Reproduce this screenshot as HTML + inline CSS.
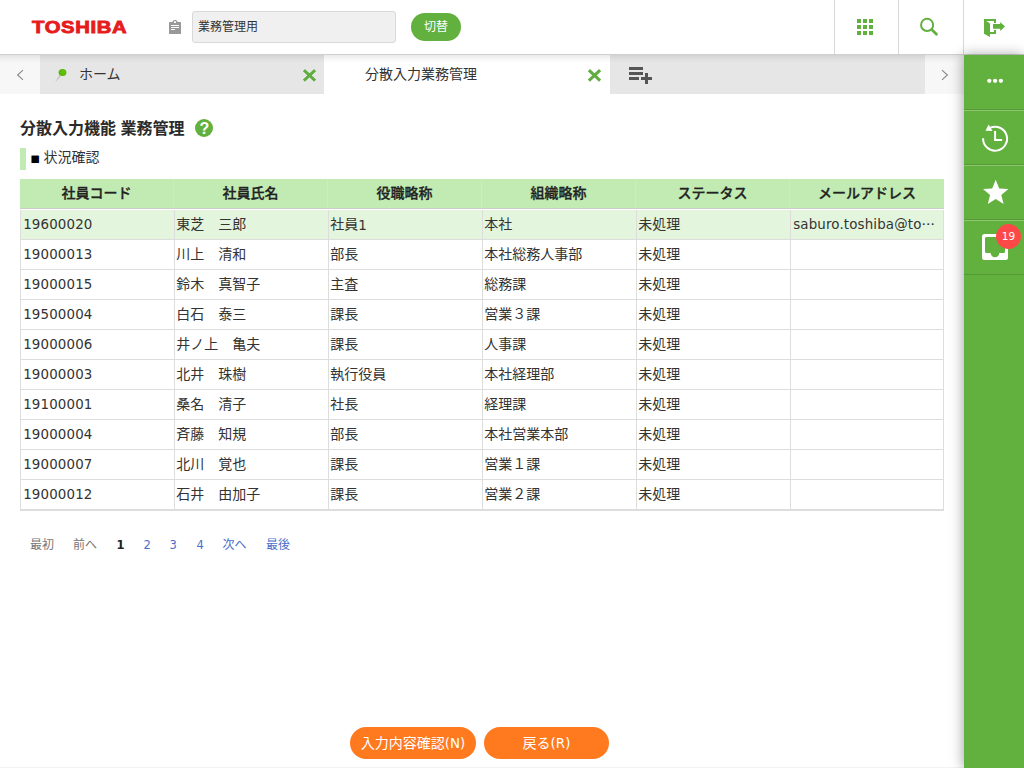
<!DOCTYPE html>
<html lang="ja">
<head>
<meta charset="utf-8">
<title>分散入力業務管理</title>
<style>
*{box-sizing:border-box;margin:0;padding:0}
html,body{width:1024px;height:768px;overflow:hidden;background:#fff}
body{position:relative;font-family:"Liberation Sans","Noto Sans CJK JP",sans-serif;font-size:14px;color:#333}
.abs{position:absolute}
/* header */
#hdr{position:absolute;left:0;top:0;width:1024px;height:55px;background:#fff;z-index:5;border-bottom:1px solid #d0d0d0}
#hsh{position:absolute;left:0;top:55px;width:964px;height:8px;z-index:5;background:linear-gradient(rgba(0,0,0,.085),rgba(0,0,0,.03) 50%,rgba(0,0,0,0))}
#logo{position:absolute;left:31.5px;top:14.1px;height:28px;line-height:28px;font-weight:bold;font-size:16.7px;color:#e61c1c;letter-spacing:.55px;-webkit-text-stroke:.85px #e61c1c;white-space:nowrap;transform-origin:0 50%;transform:scaleX(1.213)}
#ws{position:absolute;left:192px;top:11px;width:204px;height:32px;background:#f0f0f0;border:1px solid #d9d9d9;border-radius:3px;font-size:12px;line-height:30px;padding-left:5px;color:#333}
#sw{position:absolute;left:411px;top:13px;width:50px;height:28px;border-radius:14px;background:#62b03e;color:#fff;font-size:12px;line-height:28px;text-align:center}
.hb{position:absolute;top:0;width:65px;height:54px;border-left:1px solid #d8d8d8}
/* tabs */
#tabs{position:absolute;left:0;top:54px;width:964px;height:40px;background:#e6e6e6}
.tarrow{position:absolute;top:0;width:40px;height:40px;background:#f7f7f7}
.tab{position:absolute;top:0;height:40px;line-height:40px;font-size:14px;color:#333}
/* sidebar */
#side{position:absolute;left:964px;top:55px;width:60px;height:713px;background:#62b03e;z-index:6;box-shadow:-1px 0 12px rgba(0,0,0,.36)}
.si{position:absolute;left:0;width:60px;height:55px;border-top:1px solid rgba(255,255,255,.28);border-bottom:1px solid rgba(0,0,0,.12)}
/* content */
h1{position:absolute;left:20px;top:117px;font-size:16px;line-height:24px;font-weight:bold;color:#2b2b2b;white-space:nowrap}
#sec{position:absolute;left:20px;top:148px;height:22px;border-left:6px solid #c1ebb4;padding-left:5px;font-size:14px;line-height:20px;color:#333;white-space:nowrap}
#th{position:absolute;left:20px;top:179px;width:924px;height:30px;background:#c1ebb3;border-bottom:1px solid #ccc;display:flex;font-weight:500;-webkit-text-stroke:.3px #222;color:#222;font-size:14px}
#th div{width:154px;height:29px;line-height:29px;text-align:center;border-right:1px solid #ddd;white-space:nowrap}
#th div:last-child{border-right:none}
.r{position:absolute;left:20px;width:924px;height:30px;border-bottom:1px solid #ddd;display:flex;font-size:14px;color:#333}
.r div{width:154px;height:29px;line-height:28px;border-left:1px solid #ddd;padding-left:1.300px;white-space:nowrap;overflow:hidden}
.r div:last-child{border-right:1px solid #ddd}
.r.sel{background:#e3f5dc}
.r .n{font-family:"DejaVu Sans","Liberation Sans",sans-serif;font-size:13.4px;letter-spacing:.15px}
.r div.n{line-height:30px;padding-left:2.200px}
.r span.n{position:relative;top:1px}
.el{font-family:"Noto Sans CJK JP",sans-serif;letter-spacing:0;line-height:0}
#pg{position:absolute;left:0;top:536px;font-size:12px;line-height:18px;white-space:nowrap}
#pg span{position:absolute;top:0}
#pg .d{font-family:"DejaVu Sans","Liberation Sans",sans-serif;font-size:11.500px}
.bl{font-family:"DejaVu Sans","Liberation Sans",sans-serif;font-size:13.400px}
.btn{position:absolute;top:727px;height:32px;border-radius:16px;background:#ff7a1f;color:#fff;font-size:14px;line-height:32px;text-align:center;white-space:nowrap}
</style>
</head>
<body>

<div id="hdr">
  <div id="logo">TOSHIBA</div>
  <svg class="abs" style="left:168px;top:19px" width="14" height="16" viewBox="0 0 14 16"><path fill="#999" fill-rule="evenodd" d="M1.500 3h3C4.700 1.600 5.600 1 7 1s2.300.600 2.500 2h3a.5.500 0 0 1 .5.500v11a.5.500 0 0 1-.5.500h-11a.5.500 0 0 1-.5-.5v-11a.5.500 0 0 1 .5-.5zM6 2.200v1.700h2V2.200zM3 6v1h8V6zm0 2v1h8V8zm0 2v1h4v-1z"/></svg>
  <div id="ws">業務管理用</div>
  <div id="sw">切替</div>
  <div class="hb" style="left:834px">
    <svg class="abs" style="left:22px;top:19px" width="16" height="16" viewBox="0 0 16 16" fill="#62b03e"><rect x="0" y="0" width="4" height="4"/><rect x="6" y="0" width="4" height="4"/><rect x="12" y="0" width="4" height="4"/><rect x="0" y="6" width="4" height="4"/><rect x="6" y="6" width="4" height="4"/><rect x="12" y="6" width="4" height="4"/><rect x="0" y="12" width="4" height="4"/><rect x="6" y="12" width="4" height="4"/><rect x="12" y="12" width="4" height="4"/></svg>
  </div>
  <div class="hb" style="left:898px">
    <svg class="abs" style="left:20px;top:16px" width="22" height="22" viewBox="0 0 22 22" fill="none" stroke="#62b03e"><circle cx="8.1" cy="8.900" r="6.050" stroke-width="2"/><path d="M13.400 14.200L17.500 18.200" stroke-width="2.700" stroke-linecap="round"/></svg>
  </div>
  <div class="hb" style="left:963px;width:61px">
    <svg class="abs" style="left:19px;top:17px" width="24" height="22" viewBox="0 0 24 22" fill="#62b03e"><path d="M1 2h12v4h-2V4H3.300L7 6.400V15h4v-2h2v4H7v3L1 16.800z"/><path d="M10 7.100h7.200V4.900l4.800 4.500-4.800 4.600v-2.200H10z"/></svg>
  </div>
</div>

<div id="hsh"></div>
<div id="tabs">
  <div class="tarrow" style="left:0"><svg class="abs" style="left:15px;top:15px" width="10" height="12" viewBox="0 0 10 12" fill="none" stroke="#888" stroke-width="1.100"><path d="M8 1.200L2.600 6l5.400 4.800"/></svg></div>
  <div class="tab" style="left:40px;width:284px;background:#e6e6e6">
    <svg class="abs" style="left:14px;top:13px" width="14" height="16" viewBox="0 0 14 16"><path d="M5.200 8.200L7 9.300L1.800 14.700L1.400 14.400z" fill="#c6c6c6"/><ellipse cx="8.500" cy="5.500" rx="3.900" ry="3.550" fill="#58b60a"/><ellipse cx="9.200" cy="5.200" rx="2.600" ry="2.300" fill="#64c404" opacity=".8"/></svg>
    <span class="abs" style="left:39px;top:0">ホーム</span>
    <svg class="abs" style="left:262px;top:13.500px" width="15" height="15" viewBox="0 0 15 15" fill="none"><path d="M1.900 2.150L13.100 12.550M13.100 2.150L1.900 12.550" stroke="#fff" stroke-opacity=".55" stroke-width="4.200"/><path d="M1.900 2.150L13.100 12.550M13.100 2.150L1.900 12.550" stroke="#62ac44" stroke-width="3.100"/></svg>
  </div>
  <div class="tab" style="left:324px;width:286px;background:#fff">
    <span class="abs" style="left:41px;top:0">分散入力業務管理</span>
    <svg class="abs" style="left:263px;top:13.500px" width="15" height="15" viewBox="0 0 15 15" fill="none"><path d="M1.900 2.150L13.100 12.550M13.100 2.150L1.900 12.550" stroke="#fff" stroke-opacity=".55" stroke-width="4.200"/><path d="M1.900 2.150L13.100 12.550M13.100 2.150L1.900 12.550" stroke="#62ac44" stroke-width="3.100"/></svg>
  </div>
  <svg class="abs" style="left:628px;top:12px" width="26" height="20" viewBox="0 0 26 20" fill="#555"><rect x="1" y="1" width="14" height="3"/><rect x="1" y="6" width="14" height="3"/><rect x="1" y="11" width="10" height="3"/><rect x="13" y="11" width="11" height="3"/><rect x="17" y="7" width="3" height="11"/></svg>
  <div class="tarrow" style="left:925px;width:39px"><svg class="abs" style="left:14.500px;top:15px" width="10" height="12" viewBox="0 0 10 12" fill="none" stroke="#888" stroke-width="1.100"><path d="M2 1.200l5.400 4.800L2 10.800"/></svg></div>
</div>

<div id="side">
  <div class="si" style="top:0;border-top:none">
    <svg class="abs" style="left:20px;top:22px" width="22" height="8" viewBox="0 0 22 8" fill="#fff"><circle cx="5.300" cy="3.800" r="2.150"/><circle cx="11.100" cy="3.800" r="2.150"/><circle cx="16.900" cy="3.800" r="2.150"/></svg>
  </div>
  <div class="si" style="top:55px">
    <svg class="abs" style="left:15px;top:12px" width="32" height="32" viewBox="0 0 32 32" fill="none" stroke="#fff"><path d="M4.100 15.300A12 12 0 1 0 10.900 4.900" stroke-width="2"/><path d="M9.600 1.500L6.500 7.700l7 .4z" fill="#fff" stroke="none"/><path d="M16.100 8v9h7" stroke-width="2"/></svg>
  </div>
  <div class="si" style="top:110px">
    <svg class="abs" style="left:16px;top:13px" width="32" height="30" viewBox="0 0 32 30" fill="#fff"><polygon points="15.7,0.8 19.2,9.4 28.4,10.1 21.3,16.0 23.6,25.0 15.7,20.1 7.8,25.0 10.1,16.0 3.0,10.1 12.2,9.4"/></svg>
  </div>
  <div class="si" style="top:165px;border-bottom:1px solid rgba(0,0,0,.12)">
    <svg class="abs" style="left:17px;top:12px" width="28" height="28" viewBox="0 0 28 28"><path fill="#fff" fill-rule="evenodd" d="M3.500 1h21A2.500 2.500 0 0 1 27 3.500v21a2.500 2.500 0 0 1-2.500 2.500h-21A2.500 2.500 0 0 1 1 24.500v-21A2.500 2.500 0 0 1 3.500 1zM5.500 4A1.500 1.500 0 0 0 4 5.500v13A1.500 1.500 0 0 0 5.500 20H9.700a4.300 4.300 0 0 0 8.600 0h4.200a1.500 1.500 0 0 0 1.500-1.500v-13A1.500 1.500 0 0 0 22.500 4z"/></svg>
    <div class="abs" style="left:32px;top:3px;width:25px;height:25px;border-radius:50%;background:#ff4949;color:#fff;font-family:'DejaVu Sans','Liberation Sans',sans-serif;font-size:10.500px;line-height:25px;text-align:center">19</div>
  </div>
</div>

<h1>分散入力機能 業務管理</h1>
<div class="abs" style="left:195px;top:119px;width:18px;height:18px;border-radius:50%;background:#62b03e;color:#fff;font-weight:bold;font-size:16px;line-height:19.500px;padding-left:.7px;text-align:center">?</div>
<div id="sec"><span style="color:#000;font-family:'Liberation Sans',sans-serif;font-size:15.500px;line-height:10px;margin-left:-.6px;margin-right:3.700px;position:relative;top:1px">■</span><span style="position:relative;top:-1px">状況確認</span></div>

<div id="th"><div>社員コード</div><div>社員氏名</div><div>役職略称</div><div>組織略称</div><div>ステータス</div><div>メールアドレス</div></div>
<div class="r sel" style="top:210px"><div class="n">19600020</div><div>東芝　三郎</div><div>社員<span class="n">1</span></div><div>本社</div><div>未処理</div><div class="n">saburo.toshiba@to<span class="el">…</span></div></div>
<div class="r" style="top:240px"><div class="n">19000013</div><div>川上　清和</div><div>部長</div><div>本社総務人事部</div><div>未処理</div><div></div></div>
<div class="r" style="top:270px"><div class="n">19000015</div><div>鈴木　真智子</div><div>主査</div><div>総務課</div><div>未処理</div><div></div></div>
<div class="r" style="top:300px"><div class="n">19500004</div><div>白石　泰三</div><div>課長</div><div>営業３課</div><div>未処理</div><div></div></div>
<div class="r" style="top:330px"><div class="n">19000006</div><div>井ノ上　亀夫</div><div>課長</div><div>人事課</div><div>未処理</div><div></div></div>
<div class="r" style="top:360px"><div class="n">19000003</div><div>北井　珠樹</div><div>執行役員</div><div>本社経理部</div><div>未処理</div><div></div></div>
<div class="r" style="top:390px"><div class="n">19100001</div><div>桑名　清子</div><div>社長</div><div>経理課</div><div>未処理</div><div></div></div>
<div class="r" style="top:420px"><div class="n">19000004</div><div>斉藤　知規</div><div>部長</div><div>本社営業本部</div><div>未処理</div><div></div></div>
<div class="r" style="top:450px"><div class="n">19000007</div><div>北川　覚也</div><div>課長</div><div>営業１課</div><div>未処理</div><div></div></div>
<div class="r" style="top:480px;border-bottom-width:2px;height:31px"><div class="n">19000012</div><div>石井　由加子</div><div>課長</div><div>営業２課</div><div>未処理</div><div></div></div>

<div id="pg">
  <span style="left:30px;color:#777">最初</span>
  <span style="left:73px;color:#777">前へ</span>
  <span class="d" style="left:116.500px;color:#222;font-weight:bold">1</span>
  <span class="d" style="left:143.500px;color:#4a6fc9">2</span>
  <span class="d" style="left:169.500px;color:#4a6fc9">3</span>
  <span class="d" style="left:196.500px;color:#4a6fc9">4</span>
  <span style="left:222.500px;color:#4a6fc9">次へ</span>
  <span style="left:266px;color:#4a6fc9">最後</span>
</div>

<div class="btn" style="left:350px;width:126px">入力内容確認<span class="bl">(N)</span></div>
<div class="btn" style="left:484px;width:125px">戻る<span class="bl">(R)</span></div>

<div class="abs" style="left:0;top:767px;width:964px;height:1px;background:#f3f3f3"></div>
</body>
</html>
